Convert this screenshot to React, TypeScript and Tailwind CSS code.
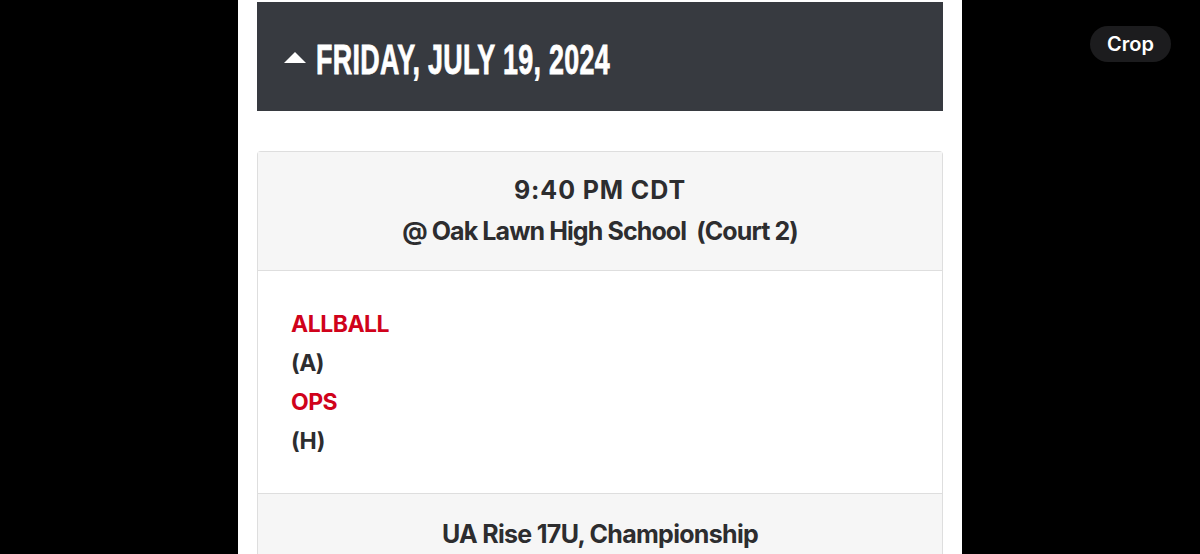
import React from 'react';

function DateHeader() {
  return (
    <div className="flex h-[109px] items-center bg-[#373a40] pl-[27px]">
      <svg width="22" height="11" viewBox="0 0 22 11" className="mr-[10px] mt-[2px]">
        <path d="M11 0 L22 11 L0 11 Z" fill="#ffffff" />
      </svg>
      <span
        className="mt-[7px] inline-block origin-left scale-x-[0.64] text-[42px] font-bold leading-none tracking-[0.5px] text-white"
        style={{ fontFamily: '"Liberation Sans", Arial, sans-serif', WebkitTextStroke: '0.8px #ffffff' }}
      >
        FRIDAY, JULY 19, 2024
      </span>
    </div>
  );
}

function GameCard() {
  return (
    <div className="mt-[40px] rounded-t-[4px] border border-b-0 border-[#dedede]">
      <div className="border-b border-[#dedede] bg-[#f6f6f6] py-[18px] text-center text-[25px] font-bold leading-[41px] tracking-[-0.9px] text-[#2d2d2f]">
        <div className="tracking-[0.9px]">9:40 PM CDT</div>
        <div className="whitespace-pre">@ Oak Lawn High School  (Court 2)</div>
      </div>
      <div className="border-b border-[#dedede] bg-white px-[33px] pb-[32px] pt-[34px] text-[23px] font-bold leading-[39px] tracking-[-0.5px]">
        <div className="text-[#d0021b]">ALLBALL</div>
        <div className="text-[#2d2d2f]">(A)</div>
        <div className="text-[#d0021b]">OPS</div>
        <div className="text-[#2d2d2f]">(H)</div>
      </div>
      <div className="h-[80px] bg-[#f6f6f6] pt-[20px] text-center text-[25px] font-bold leading-[41px] tracking-[-0.7px] text-[#2d2d2f]">
        UA Rise 17U, Championship
      </div>
    </div>
  );
}

export default function App() {
  return (
    <div
      className="relative flex h-[554px] w-[1200px] justify-center overflow-hidden bg-black"
      style={{ fontFamily: 'Inter, "Noto Sans", sans-serif' }}
    >
      <div className="w-[724px] bg-white px-[19px] pt-[2px]">
        <DateHeader />
        <GameCard />
      </div>
      <button className="absolute right-[29px] top-[26px] h-[36px] rounded-full bg-[#1c1c1e] px-[17px] text-[20px] font-semibold text-white">
        Crop
      </button>
    </div>
  );
}
